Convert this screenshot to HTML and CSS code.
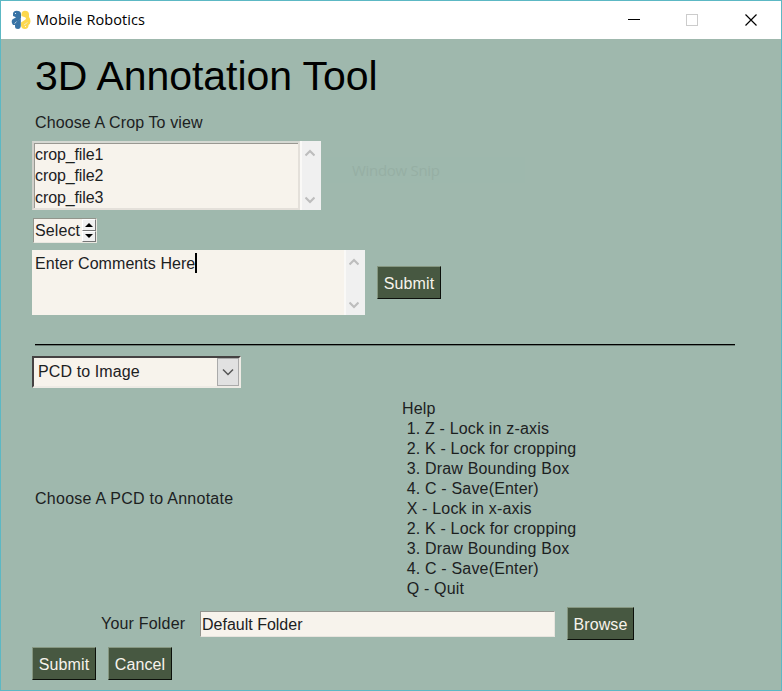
FILE: index.html
```html
<!DOCTYPE html>
<html lang="en">
<head>
<meta charset="utf-8">
<title>Mobile Robotics</title>
<link rel="stylesheet" href="styles.css">
</head>
<body>
<div class="window">
  <header class="titlebar">
    <svg class="logo" width="20" height="20" viewBox="0 0 20 20">
      <path d="M2 6V3.500Q2.500 .800 5.500 .800Q9.800 .800 10 4V7.500Q10 9 8.500 10L5.500 12Q4.500 13 4.500 15H2Q.500 13.500 .700 11Q1 9 3.500 8.200L5 7.200Z" fill="#3873a5"/>
      <path d="M4 14.500Q4 12.500 6 11.200L9.800 8.800V16Q9.500 19 7 19Q4 19 4 16.500Z" fill="#3873a5"/>
      <path d="M10.500 4Q11 .800 14 .800Q17.500 .800 18 4V7Q19.600 8.500 19.500 11.500Q19.400 14 17.500 15V16Q17 19 14 19Q10.500 19 10 15.500V12.500L14.500 9.500Q15.500 8.500 14.500 7.500L10.500 6Z" fill="#fcd84e"/>
      <path d="M3.500 13.500L5.500 11.700M13 15L16.500 12.500" stroke="#e9f1f5" stroke-width=".7" fill="none"/>
      <circle cx="4.500" cy="3.500" r=".6" fill="#fff"/><circle cx="14.500" cy="16.500" r=".6" fill="#fff"/>
    </svg>
    <span class="caption">Mobile Robotics</span>
    <div class="controls">
      <svg width="12" height="12"><path d="M0 5.500H12" stroke="#000"/></svg>
      <svg width="12" height="12"><rect x=".5" y=".5" width="11" height="11" fill="none" stroke="#ccc"/></svg>
      <svg width="12" height="12"><path d="M.5 .5L11.500 11.500M11.500 .5L.5 11.500" stroke="#000" stroke-width="1.200"/></svg>
    </div>
  </header>
  <main class="content">
    <h1 class="title">3D Annotation Tool</h1>
    <div class="label crop-label">Choose A Crop To view</div>
    <div class="list-frame">
      <div class="listbox"><div>crop_file1</div><div>crop_file2</div><div>crop_file3</div></div>
      <div class="scrollbar">
        <svg width="10" height="8"><path d="M.5 6.500L5 2L9.500 6.500" /></svg>
        <svg width="10" height="8"><path d="M.5 1.500L5 6L9.500 1.500" /></svg>
      </div>
    </div>
    <div class="spin">
      <span>Select</span>
      <div class="spin-buttons">
        <i><svg width="8" height="4"><path d="M0 4L4 0L8 4Z"/></svg></i>
        <i><svg width="8" height="4"><path d="M0 0L4 4L8 0Z"/></svg></i>
      </div>
    </div>
    <div class="comment-row">
      <div class="comments">
        <div class="comment-text"><span>Enter Comments Here</span><b class="caret"></b></div>
        <div class="scrollbar">
          <svg width="10" height="8"><path d="M.5 6.500L5 2L9.500 6.500" /></svg>
          <svg width="10" height="8"><path d="M.5 1.500L5 6L9.500 1.500" /></svg>
        </div>
      </div>
      <div class="button">Submit</div>
    </div>
    <div class="rule"></div>
    <div class="combo">
      <span>PCD to Image</span>
      <div class="combo-button"><svg width="12" height="8"><path d="M1 1.500L6 6.500L11 1.500"/></svg></div>
    </div>
    <div class="annotate-row">
      <div class="label annotate-label">Choose A PCD to Annotate</div>
      <div class="label help">Help
 1. Z - Lock in z-axis
 2. K - Lock for cropping
 3. Draw Bounding Box
 4. C - Save(Enter)
 X - Lock in x-axis
 2. K - Lock for cropping
 3. Draw Bounding Box
 4. C - Save(Enter)
 Q - Quit</div>
    </div>
    <div class="folder-row">
      <div class="label folder-label">Your Folder</div>
      <div class="input">Default Folder</div>
      <div class="button browse">Browse</div>
    </div>
    <div class="actions">
      <div class="button">Submit</div>
      <div class="button">Cancel</div>
    </div>
  </main>
  <div class="snip">Window Snip</div>
</div>
</body>
</html>
```
FILE: styles.css
```css
* { box-sizing: border-box; }
body { margin: 0; font: 16px/20px "Liberation Sans", Arial, sans-serif; letter-spacing: .1px; color: #1c211f; }
svg { display: block; }
.window { position: relative; width: 782px; height: 691px; border: 1px solid #5cb8c4; background: #9fb8ad; overflow: hidden; }
.titlebar { display: flex; align-items: center; height: 38px; padding: 0 24px 0 10px; background: #fff; }
.caption { margin-left: 5px; font: 14.500px/20px "Open Sans", "Noto Sans", sans-serif; letter-spacing: .08px; color: #000; }
.controls { display: flex; gap: 46px; margin-left: auto; }
.controls svg:nth-child(2) { margin-right: 1px; }
.content { display: flex; flex-direction: column; align-items: flex-start; padding: 12px 0 0 31px; }
.title { margin: 0 0 0 3px; height: 50px; font-size: 41px; line-height: 50px; font-weight: 400; letter-spacing: -.05px; color: #000; white-space: nowrap; }
.label { white-space: pre; }
.crop-label { margin: 12px 0 0 3px; letter-spacing: .12px; }
.list-frame { display: flex; width: 289px; height: 69px; margin-top: 8px; background: #f0f0f0; }
.listbox { width: 268px; height: 69px; padding: 1px 0 0 1px; border: 2px solid; border-color: #d5d8d2 #e4e0da #e4e0da #d0d0ca; background: #f7f3ec; box-shadow: inset 1px 1px #999892; line-height: 21.300px; letter-spacing: -.1px; }
.scrollbar { display: flex; flex-direction: column; align-items: center; justify-content: space-between; width: 21px; padding: 8px 3px 6px 0; border-left: 2px solid #faf9f7; background: #f0f0f0; }
.scrollbar path { fill: none; stroke: #bdbdbd; stroke-width: 2.200; }
.spin { display: flex; justify-content: space-between; width: 64px; height: 25px; margin: 8px 0 0 1px; padding: 0 0 0 1px; border: 1px solid; border-color: #92958c #e9e7e0 #e9e7e0 #92958c; background: #f7f3ec; line-height: 24px; }
.spin-buttons { display: flex; flex-direction: column; width: 14px; height: 23px; }
.spin-buttons i { display: flex; align-items: center; justify-content: center; height: 11.500px; background: #f0f0f0; border: 1px solid; border-color: #fff #777 #777 #fff; }
.comment-row { display: flex; align-items: center; gap: 12px; margin-top: 7px; }
.comments { display: flex; justify-content: space-between; width: 333px; height: 65px; background: #f7f3ec; }
.comment-text { display: flex; height: 20px; margin: 3px 0 0 3px; line-height: 21px; letter-spacing: .06px; }
.caret { width: 2px; height: 20px; background: #000; }
.button { width: 64px; height: 33px; border: 1px solid; border-color: #869781 #0c100b #0c100b #869781; background: #475841; color: #f7f3ec; text-align: center; line-height: 33px; }
.rule { width: 700px; height: 1px; margin: 29px 0 0 3px; background: #000; box-shadow: 0 1px #6b7b74; }
.combo { display: flex; justify-content: space-between; width: 209px; height: 32px; margin-top: 11px; padding-left: 4px; border: 2px solid; border-color: #454242 #eeebe5 #eeebe5 #454242; background: #f7f3ec; line-height: 28px; }
.combo-button { display: flex; align-items: center; justify-content: center; width: 22px; height: 28px; border: 1px solid #aaa; background: #e1e1e1; }
.combo-button path { fill: none; stroke: #555; stroke-width: 1.500; }
.annotate-row { display: flex; align-items: center; margin: 11px 0 0 3px; }
.annotate-label { width: 367px; letter-spacing: .26px; }
.help { letter-spacing: .18px; }
.folder-row { display: flex; align-items: center; width: 602px; margin-top: 8px; }
.folder-label { width: 168px; padding: 1px 0 0 69px; letter-spacing: .2px; }
.input { width: 355px; height: 26px; padding-left: 1px; border: 1px solid; border-color: #93958f #e7e4de #e7e4de #93958f; background: #f7f3ec; line-height: 25px; letter-spacing: 0; }
.browse { width: 67px; margin-left: 12px; }
.actions { display: flex; gap: 12px; margin-top: 7px; }
.snip { position: absolute; left: 324px; top: 156px; width: 200px; height: 26px; padding-left: 27px; background: #9eb8ad; color: #96afa4; font: 15px/27px "Open Sans", sans-serif; letter-spacing: -.3px; }
```
